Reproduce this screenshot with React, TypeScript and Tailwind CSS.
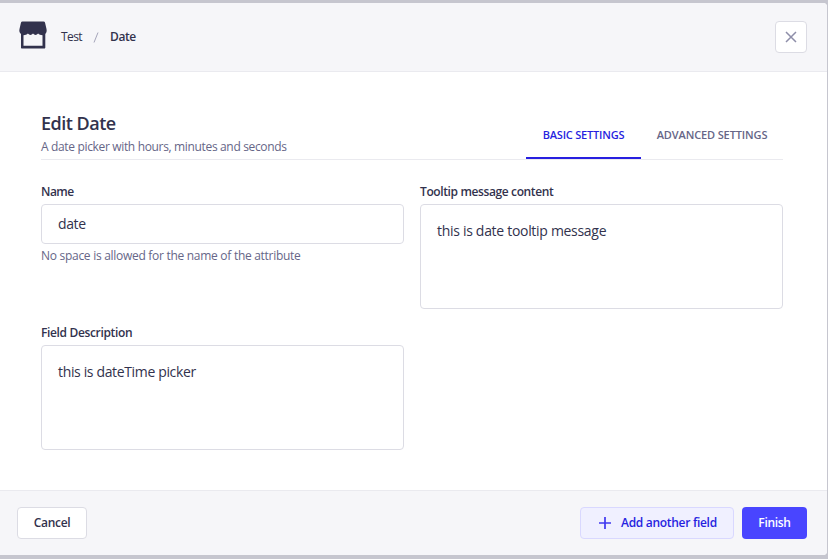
import { useState } from "react";

type FieldProps = {
  id: string;
  label: string;
  value: string;
  textClass: string;
  labelClass: string;
  multiline?: boolean;
  hint?: string;
};

function Field({ id, label, value, textClass, labelClass, multiline, hint }: FieldProps) {
  const box = "block w-full rounded-[4px] border border-[#dcdce4] bg-white px-4 text-[#32324d] outline-none";
  return (
    <div className="w-[363px]">
      <label htmlFor={id} className={`mb-1 block text-[12px] leading-4 font-semibold text-[#32324d] ${labelClass}`}>
        {label}
      </label>
      {multiline ? (
        <textarea id={id} defaultValue={value} className={`${box} h-[105px] resize-none pt-4 text-[14px] leading-5 ${textClass}`} />
      ) : (
        <input id={id} defaultValue={value} className={`${box} h-10 pb-px text-[14px] ${textClass}`} />
      )}
      {hint && <p className="mt-1 text-[12px] leading-4 tracking-[-0.285px] text-[#666687]">{hint}</p>}
    </div>
  );
}

function StoreIcon() {
  return (
    <svg width="28" height="28" viewBox="0 0 28 28" className="mb-1 shrink-0" aria-hidden="true">
      <path
        fill="#32324d"
        d="M3.500 0.500h21c.8 0 1.300.4 1.500 1l1.500 6.500c.5 2.200-.1 3.900-1.200 5V26.500c0 .6-.4 1-1 1H3c-.6 0-1-.4-1-1V13C.6 11.900 0 10.200.5 8L2 1.500c.2-.6.7-1 1.500-1z"
      />
      <path fill="#f6f6f9" d="M4.500 14.200c1.900 0 3.300-.4 4.400-1.600 1.400 1.700 3.700 1.700 5.100 0 1.400 1.700 3.700 1.700 5.100 0 1.100 1.200 2.500 1.600 4.400 1.600V24.700h-19z" />
    </svg>
  );
}

export default function App() {
  const [tab, setTab] = useState("basic");
  const tabClass = (name: string) =>
    tab === name ? "border-[#271fe0] text-[#271fe0]" : "border-transparent text-[#666687]";
  return (
    <div className="h-[559px] w-[828px] bg-[#c6c6cf] pt-[3px] pr-px pb-1 font-['Open_Sans',sans-serif]">
      <div className="flex h-full flex-col overflow-hidden rounded-r-[4px] bg-white">
        <header className="flex h-[69px] shrink-0 items-center border-b border-[#eaeaef] bg-[#f6f6f9] pr-5 pl-[19px]">
          <StoreIcon />
          <nav className="ml-3.5 flex items-center text-[12px] leading-4 text-[#32324d]">
            <span className="w-[32px] tracking-[-0.6px]">Test</span>
            <svg width="6" height="11" viewBox="0 0 6 11" fill="none" stroke="#a5a5ba" className="mr-[11px]" aria-hidden="true">
              <path d="M1 10.500L5 .5" />
            </svg>
            <span className="font-semibold tracking-[-0.4px]">Date</span>
          </nav>
          <button aria-label="Close" className="ml-auto flex size-8 items-center justify-center rounded-[4px] border border-[#dcdce4] bg-white">
            <svg width="12" height="12" viewBox="0 0 12 12" fill="none" stroke="#8e8ea9" strokeWidth="1.500">
              <path d="M1 1l10 10M11 1L1 11" />
            </svg>
          </button>
        </header>

        <main className="grow px-[41px] pt-10">
          <div className="flex h-12 w-[742px] items-end justify-between border-b border-[#eaeaef]">
            <div>
              <h1 className="text-[18px] leading-[22px] font-semibold tracking-[-0.5px] text-[#32324d]">Edit Date</h1>
              <p className="mt-[5px] mb-1 text-[12px] leading-4 tracking-[-0.34px] text-[#666687]">A date picker with hours, minutes and seconds</p>
            </div>
            <div className="flex text-[11px] leading-4 font-semibold">
              <button onClick={() => setTab("basic")} className={`h-10 w-[115px] border-b-2 pb-1.5 tracking-[-0.2px] ${tabClass("basic")}`}>
                BASIC SETTINGS
              </button>
              <button onClick={() => setTab("advanced")} className={`h-10 w-[142px] border-b-2 pb-1.5 tracking-[-0.12px] ${tabClass("advanced")}`}>
                ADVANCED SETTINGS
              </button>
            </div>
          </div>
          <div className="mt-6 grid w-[742px] grid-cols-2 gap-4">
            <Field id="name" label="Name" value="date" textClass="tracking-[-0.4px]" labelClass="tracking-[-0.5px]" hint="No space is allowed for the name of the attribute" />
            <Field id="tooltip" label="Tooltip message content" value="this is date tooltip message" textClass="tracking-[-0.3px]" labelClass="tracking-[-0.38px]" multiline />
            <Field id="description" label="Field Description" value="this is dateTime picker" textClass="tracking-[-0.35px]" labelClass="tracking-[-0.35px]" multiline />
          </div>
        </main>

        <footer className="flex h-[65px] shrink-0 items-center gap-2 border-t border-[#eaeaef] bg-[#f6f6f9] pr-5 pl-[17px] text-[12px] leading-4 font-semibold tracking-[-0.3px]">
          <button className="mr-auto h-8 w-[70px] rounded-[4px] border border-[#dcdce4] bg-white text-[#32324d]">Cancel</button>
          <button className="flex h-8 w-[154px] items-center rounded-[4px] border border-[#d9d8ff] bg-[#f0f0ff] pl-[18px] text-[#271fe0]">
            <svg width="12" height="12" viewBox="0 0 12 12" fill="none" stroke="#4038f0" strokeWidth="1.700" className="mr-2.5">
              <path d="M6 0v12M0 6h12" />
            </svg>
            <span className="whitespace-nowrap">Add another field</span>
          </button>
          <button className="h-8 w-[65px] rounded-[4px] bg-[#4945ff] text-white">Finish</button>
        </footer>
      </div>
    </div>
  );
}
